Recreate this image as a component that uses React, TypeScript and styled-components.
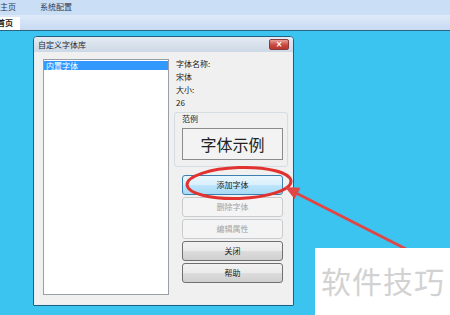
import React from "react";
import styled, { createGlobalStyle } from "styled-components";

const GlobalStyle = createGlobalStyle`
  html, body {
    margin: 0;
    padding: 0;
    background: #3bc4f0;
  }
  body {
    font-family: "Noto Sans CJK SC", "Noto Sans", sans-serif;
  }
`;

const Page = styled.div`
  position: relative;
  width: 450px;
  height: 315px;
  overflow: hidden;
  display: flex;
  flex-direction: column;
  font-size: 8px;
  color: #1a1a1a;
`;

const MenuBar = styled.div`
  height: 15px;
  display: flex;
  align-items: center;
  background: #cadef6;
  padding-bottom: 2px;
  box-sizing: border-box;
`;

const MenuItem = styled.span<{ $offset?: number }>`
  line-height: 10px;
  color: #2a3a55;
  white-space: nowrap;
  margin-left: ${(p) => p.$offset ?? 0}px;
`;

const TabStrip = styled.div`
  height: 15px;
  display: flex;
  align-items: flex-end;
  background: linear-gradient(#dfeaf9, #c7daf3);
  border-bottom: 1px solid #2a6581;
`;

const Tab = styled.div<{ $active?: boolean }>`
  height: 13px;
  width: 20px;
  overflow: hidden;
  background: ${(p) => (p.$active ? "#ffffff" : "transparent")};
  font-weight: bold;
  line-height: 12px;
  white-space: nowrap;
  & > span {
    margin-left: -3px;
  }
`;

const Desktop = styled.div`
  flex: 1;
  position: relative;
  background: #3bc4f0;
`;

const Window = styled.div`
  position: absolute;
  left: 33px;
  top: 5px;
  width: 261px;
  height: 270px;
  box-sizing: border-box;
  border: 1px solid #205f7e;
  border-radius: 4px 4px 1px 1px;
  background: #f0f0f0;
  display: flex;
  flex-direction: column;
  box-shadow: inset 0 0 0 1px #e6eef5;
`;

const TitleBar = styled.div`
  height: 15px;
  display: flex;
  align-items: center;
  justify-content: space-between;
  padding: 0 4px 0 4px;
  background: linear-gradient(#e4ebf3, #cdd9e6);
  border-radius: 3px 3px 0 0;
`;

const Title = styled.span`
  line-height: 10px;
  color: #1e2a3a;
`;

const CloseButton = styled.div`
  width: 18px;
  height: 9px;
  border: 1px solid #8a3a3a;
  border-radius: 2px;
  background: linear-gradient(#e9a09a, #c9483f 55%, #b8352d);
  display: flex;
  align-items: center;
  justify-content: center;
  color: #ffffff;
  font-family: "DejaVu Sans", sans-serif;
  font-weight: bold;
  font-size: 8px;
  line-height: 8px;
`;

const Body = styled.div`
  flex: 1;
  display: flex;
  gap: 5px;
  padding: 7px 4px 10px 9px;
`;

const ListBox = styled.div`
  width: 126px;
  box-sizing: border-box;
  border: 1px solid #9a9ea6;
  background: #ffffff;
  padding-top: 1px;
`;

const ListItem = styled.div<{ $selected?: boolean }>`
  height: 9px;
  line-height: 9px;
  padding-left: 2px;
  background: ${(p) => (p.$selected ? "#3399ff" : "transparent")};
  color: ${(p) => (p.$selected ? "#ffffff" : "#1a1a1a")};
`;

const SidePanel = styled.div`
  width: 115px;
  display: flex;
  flex-direction: column;
`;

const InfoLine = styled.div`
  height: 13px;
  line-height: 13px;
  padding-left: 2px;
  &:first-child {
    margin-top: -2px;
  }
`;

const GroupBox = styled.div`
  margin-top: 3px;
  width: 114px;
  box-sizing: border-box;
  border: 1px solid #d5dde3;
  border-radius: 3px;
  padding: 0 0 6px 7px;
`;

const GroupLabel = styled.div`
  line-height: 11px;
`;

const Sample = styled.div`
  margin-top: 4px;
  width: 101px;
  height: 32px;
  box-sizing: border-box;
  border: 1px solid #8c8c8c;
  background: #f3f3f3;
  display: flex;
  align-items: center;
  justify-content: center;
  font-size: 16px;
  color: #222;
`;

const ButtonColumn = styled.div`
  margin-top: 8px;
  padding-left: 8px;
  display: flex;
  flex-direction: column;
  gap: 2px;
`;

type Variant = "focus" | "disabled" | "normal";

const DialogButton = styled.div<{ $variant: Variant }>`
  width: 101px;
  height: 20px;
  box-sizing: border-box;
  border-radius: 3px;
  display: flex;
  align-items: center;
  justify-content: center;
  line-height: 10px;
  border: 1px solid
    ${(p) =>
      p.$variant === "focus" ? "#3c7fb1" : p.$variant === "disabled" ? "#c9ccce" : "#707070"};
  color: ${(p) => (p.$variant === "disabled" ? "#a3a3a3" : "#1a1a1a")};
  background: ${(p) =>
    p.$variant === "focus"
      ? "linear-gradient(#eaf6fd, #d9f0fc 50%, #bee6fd 50%, #a7d9f5)"
      : p.$variant === "disabled"
      ? "#f4f4f4"
      : "linear-gradient(#f2f2f2, #ebebeb 50%, #dddddd 50%, #cfcfcf)"};
`;

const Annotation = styled.svg`
  position: absolute;
  left: 0;
  top: 0;
  pointer-events: none;
`;

const Watermark = styled.div`
  position: absolute;
  left: 315px;
  top: 248px;
  width: 135px;
  height: 67px;
  background: #ffffff;
  display: flex;
  align-items: center;
  padding-left: 6px;
  box-sizing: border-box;
  font-size: 30px;
  letter-spacing: 1px;
  color: #d2d2d2;
  padding-bottom: 4px;
`;

const buttons: { label: string; variant: Variant }[] = [
  { label: "添加字体", variant: "focus" },
  { label: "删除字体", variant: "disabled" },
  { label: "编辑属性", variant: "disabled" },
  { label: "关闭", variant: "normal" },
  { label: "帮助", variant: "normal" },
];

export default function App() {
  return (
    <>
      <GlobalStyle />
      <Page>
        <MenuBar>
          <MenuItem>主页</MenuItem>
          <MenuItem $offset={24}>系统配置</MenuItem>
        </MenuBar>
        <TabStrip>
          <Tab $active>
            <span>首页</span>
          </Tab>
        </TabStrip>
        <Desktop>
          <Window>
            <TitleBar>
              <Title>自定义字体库</Title>
              <CloseButton>×</CloseButton>
            </TitleBar>
            <Body>
              <ListBox>
                <ListItem $selected>内置字体</ListItem>
              </ListBox>
              <SidePanel>
                <InfoLine>字体名称:</InfoLine>
                <InfoLine>宋体</InfoLine>
                <InfoLine>大小:</InfoLine>
                <InfoLine>26</InfoLine>
                <GroupBox>
                  <GroupLabel>范例</GroupLabel>
                  <Sample>字体示例</Sample>
                </GroupBox>
                <ButtonColumn>
                  {buttons.map((b) => (
                    <DialogButton key={b.label} $variant={b.variant}>
                      {b.label}
                    </DialogButton>
                  ))}
                </ButtonColumn>
              </SidePanel>
            </Body>
          </Window>
        </Desktop>
        <Annotation width="450" height="315" viewBox="0 0 450 315">
          <ellipse
            cx="239"
            cy="183"
            rx="52"
            ry="15.5"
            fill="none"
            stroke="#e2322f"
            strokeWidth="3"
            transform="rotate(-2 239 183)"
          />
          <line x1="406" y1="249" x2="296" y2="193" stroke="#e04645" strokeWidth="3" />
          <polygon points="285,187 300.5,187.8 294.6,199" fill="#e04645" />
        </Annotation>
        <Watermark>软件技巧</Watermark>
      </Page>
    </>
  );
}
